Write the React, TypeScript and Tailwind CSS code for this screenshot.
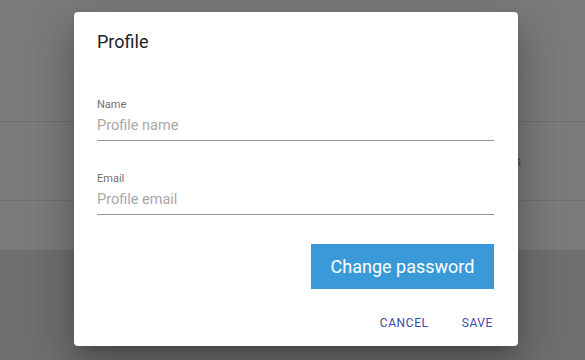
export default function App() {
  return (
    <div className="relative w-[585px] h-[360px] overflow-hidden flex flex-col font-['Roboto',sans-serif]">
      {/* page behind the overlay */}
      <div className="h-[121px] bg-[#7b7b7b]" />
      <div className="h-px bg-[#6f6f6f]" />
      <div className="h-[78px] bg-[#7b7b7b] flex items-center justify-end pr-[64px]">
        <span className="text-[15px] text-[#1d4a6b]">Sessions</span>
      </div>
      <div className="h-px bg-[#6f6f6f]" />
      <div className="h-[49px] bg-[#7b7b7b]" />
      <div className="flex-1 bg-[#6e6f71]" />

      {/* dialog */}
      <div className="absolute left-[74px] top-[12px] w-[444px] h-[334px] bg-white rounded-[4px] flex flex-col shadow-[0_11px_15px_-7px_rgba(0,0,0,0.2),0_24px_38px_3px_rgba(0,0,0,0.14),0_9px_46px_8px_rgba(0,0,0,0.12)]">
        <h2 className="pt-[18px] pl-[23px] text-[18px] leading-[24px] text-[#212121]">Profile</h2>

        <div className="mt-[43px] pl-[23px] pr-[24px] flex flex-col gap-[30px]">
          <label className="flex flex-col gap-[2px]">
            <span className="text-[11px] leading-[16px] text-[#707070]">Name</span>
            <input
              className="w-full h-[26px] pb-[5px] bg-transparent outline-none text-[14.5px] leading-[20px] text-[#212121] placeholder:text-[#a8a8a8] border-b border-[#949494]"
              placeholder="Profile name"
            />
          </label>
          <label className="flex flex-col gap-[2px]">
            <span className="text-[11px] leading-[16px] text-[#707070]">Email</span>
            <input
              className="w-full h-[26px] pb-[5px] bg-transparent outline-none text-[14.5px] leading-[20px] text-[#212121] placeholder:text-[#a8a8a8] border-b border-[#949494]"
              placeholder="Profile email"
            />
          </label>
        </div>

        <button className="self-end mt-[29px] mr-[24px] w-[183px] h-[45px] bg-[#3a9ad9] text-white text-[18px] leading-[24px]">
          Change password
        </button>

        <div className="mt-[16px] h-[36px] flex items-center justify-end gap-[33px] pr-[25px] text-[12px] tracking-[0.05em] text-[#3f4ba8]">
          <button>CANCEL</button>
          <button>SAVE</button>
        </div>
      </div>
    </div>
  );
}
